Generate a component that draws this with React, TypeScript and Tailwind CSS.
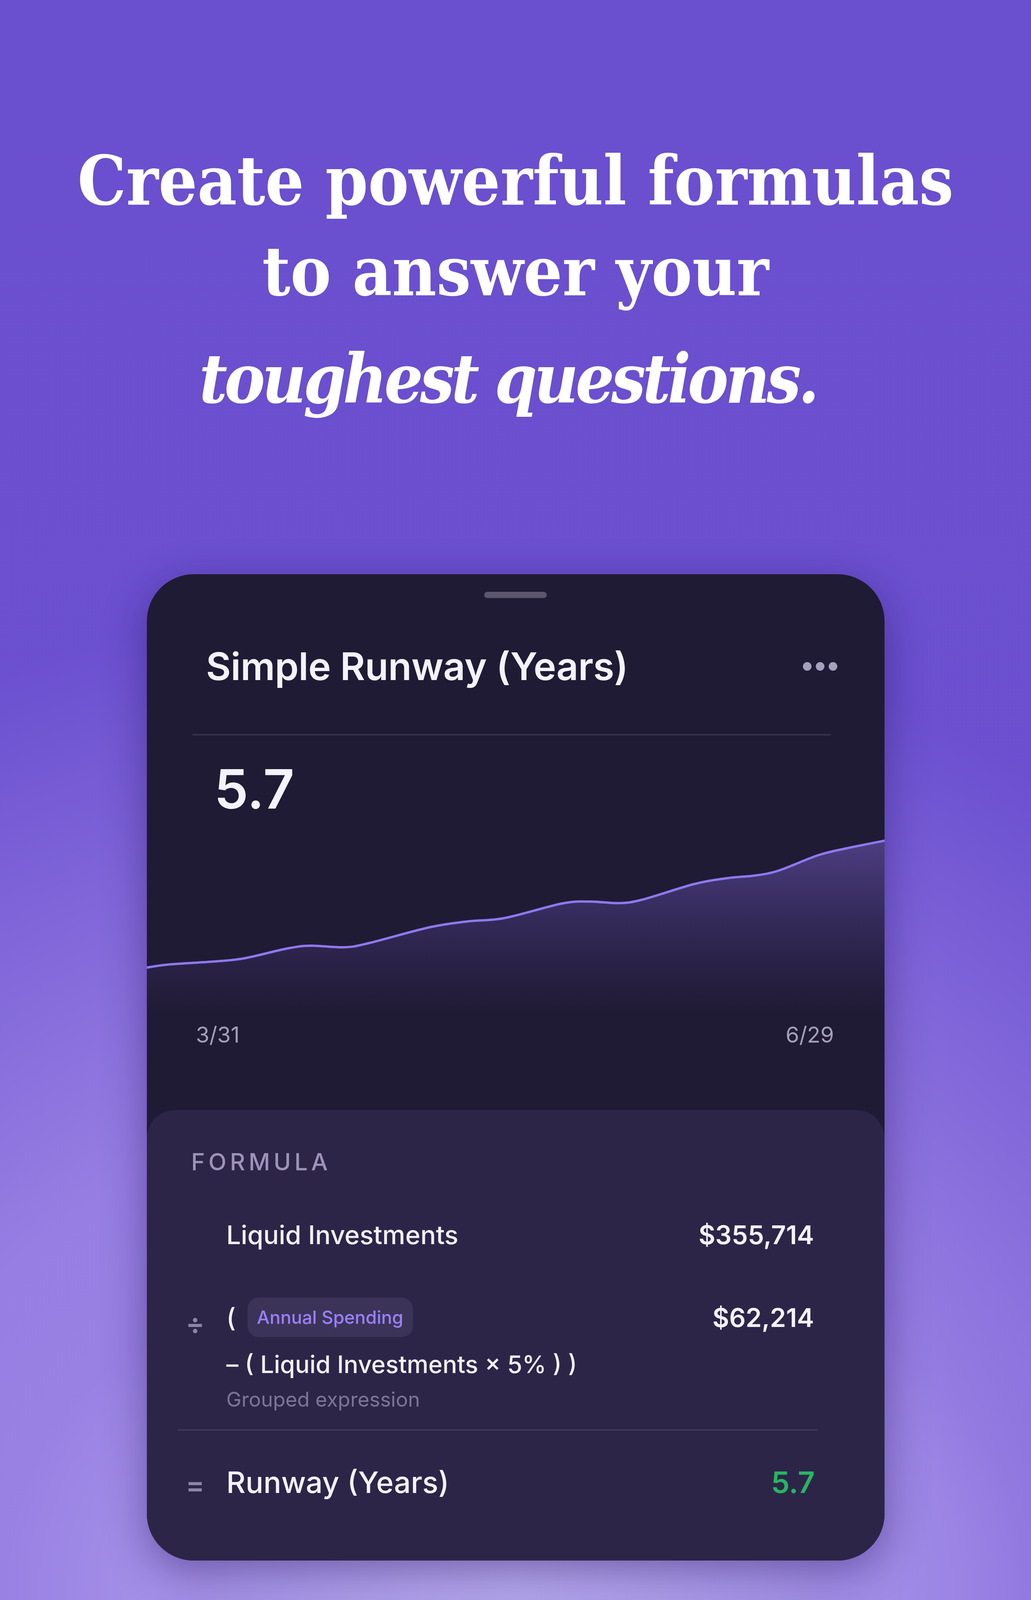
import React from "react";

const PTS: [number, number][] = [
  [-6, 338], [57, 329], [178, 321], [251, 313], [360, 288], [420, 281], [505, 285],
  [566, 275], [723, 234], [820, 219], [917, 210], [1063, 173], [1135, 168], [1208, 172],
  [1269, 163], [1402, 123], [1487, 108], [1560, 101], [1620, 88], [1717, 50], [1790, 32],
  [1895, 11],
];

function smooth(points: [number, number][]) {
  let d = `M${points[0][0]},${points[0][1]}`;
  for (let i = 0; i < points.length - 1; i++) {
    const p0 = points[Math.max(i - 1, 0)];
    const p1 = points[i];
    const p2 = points[i + 1];
    const p3 = points[Math.min(i + 2, points.length - 1)];
    const t = 1 / 6;
    const c1x = p1[0] + (p2[0] - p0[0]) * t;
    const c1y = p1[1] + (p2[1] - p0[1]) * t;
    const c2x = p2[0] - (p3[0] - p1[0]) * t;
    const c2y = p2[1] - (p3[1] - p1[1]) * t;
    d += ` C${c1x.toFixed(1)},${c1y.toFixed(1)} ${c2x.toFixed(1)},${c2y.toFixed(1)} ${p2[0]},${p2[1]}`;
  }
  return d;
}

function Dots() {
  return (
    <div className="flex gap-[11px]">
      <span className="block w-[22px] h-[22px] rounded-full bg-[#a6a0bf]" />
      <span className="block w-[22px] h-[22px] rounded-full bg-[#a6a0bf]" />
      <span className="block w-[22px] h-[22px] rounded-full bg-[#a6a0bf]" />
    </div>
  );
}

function Chart() {
  const line = smooth(PTS);
  const area = `${line} L1895,450 L-6,450 Z`;
  return (
    <svg width="1889" height="450" viewBox="0 0 1889 450" className="block">
      <defs>
        <linearGradient id="fillg" x1="0" y1="0" x2="0" y2="450" gradientUnits="userSpaceOnUse">
          <stop offset="0" stopColor="#8e72f2" stopOpacity="0.42" />
          <stop offset="0.55" stopColor="#7a5fe0" stopOpacity="0.18" />
          <stop offset="1" stopColor="#6b52d0" stopOpacity="0" />
        </linearGradient>
      </defs>
      <path d={area} fill="url(#fillg)" />
      <path d={line} fill="none" stroke="#8f78f0" strokeWidth="6" strokeLinecap="round" />
    </svg>
  );
}

function Pill({ label, selected, w }: { label: string; selected?: boolean; w: string }) {
  if (selected) {
    return (
      <div className={`${w} shrink-0 h-[155px] rounded-full border-[5px] border-[#9b84f5] bg-[#2f2550] flex items-center justify-center text-[58px] font-semibold text-[#9c84f7] whitespace-nowrap`}>
        {label}
      </div>
    );
  }
  return (
    <div className={`${w} shrink-0 h-[155px] rounded-full border-[2px] border-[#3d3553] bg-[#332b45] flex items-center justify-center text-[58px] font-normal text-[#aaa3be] whitespace-nowrap`}>
      {label}
    </div>
  );
}

export default function App() {
  return (
    <div className="w-[2640px] h-[5736px] overflow-hidden bg-[#6a4fce] bg-[image:radial-gradient(ellipse_1300px_900px_at_50%_70.5%,rgba(188,176,242,0.9)_0%,rgba(188,176,242,0)_100%),radial-gradient(ellipse_2800px_2600px_at_40%_72%,rgba(160,138,230,1)_0%,rgba(157,134,229,0.85)_50%,rgba(120,90,215,0)_100%),linear-gradient(180deg,#6a4fce_0%,#6c50d1_50%,#7a5ad7_100%)] flex flex-col items-center font-['Inter',sans-serif]">
      <h1 className="pt-[347px] text-center text-white font-bold text-[174px] leading-[232px] font-['DejaVu_Serif_Condensed','DejaVu_Serif',serif]">
        <div>Create powerful formulas</div>
        <div>to answer your</div>
        <div className="italic mt-[43px] tracking-[-8px] pr-[40px]">toughest questions.</div>
      </h1>

      {/* Card 1 */}
      <div className="mt-[384px] w-[1889px] shrink-0 rounded-[120px] bg-[#201b34] overflow-hidden shadow-[0_30px_110px_rgba(35,18,90,0.45)] flex flex-col">
        <div className="pt-[45px] flex justify-center">
          <div className="w-[160px] h-[16px] rounded-full bg-[#5b566e]" />
        </div>
        <div className="mt-[115px] flex items-center justify-between pl-[152px] pr-[121px]">
          <h2 className="text-[98px] leading-[120px] font-semibold text-[#f4f2fc] tracking-[-0.5px]">Simple Runway (Years)</h2>
          <Dots />
        </div>
        <div className="mt-[113px] ml-[117px] mr-[138px] h-[4px] bg-[#363049]" />
        <div className="mt-[67px] pl-[173px] text-[139px] leading-[139px] font-semibold text-[#f4f2fc]">5.7</div>
        <div className="mt-[51px]">
          <Chart />
        </div>
        <div className="mt-[25px] flex justify-between pl-[126px] pr-[129px] text-[56px] leading-[68px] text-[#a59fbb]">
          <span>3/31</span>
          <span>6/29</span>
        </div>

        {/* Formula */}
        <div className="mt-[159px] rounded-t-[72px] bg-[#2d2548] pt-[96px] pb-[154px] flex flex-col">
          <div className="pl-[114px] text-[60px] leading-[72px] font-medium tracking-[0.15em] text-[#9d93b8]">FORMULA</div>

          <div className="ml-[78px] mr-[172px] flex flex-col">
            <div className="mt-[111px] flex items-center">
              <div className="w-[126px] shrink-0" />
              <div className="flex-1 text-[66px] leading-[80px] font-medium text-[#f2f0fa]">Liquid Investments</div>
              <div className="pr-[8px] text-[66px] leading-[80px] font-semibold text-[#f4f2fc]">$355,714</div>
            </div>

            <div className="mt-[121px] h-[101px] flex items-center">
              <div className="w-[126px] shrink-0 pl-[22px] mt-[30px] text-[72px] leading-[80px] font-semibold text-[#8e86a6]">÷</div>
              <div className="flex-1 flex items-center">
                <span className="text-[66px] leading-[80px] font-medium text-[#f2f0fa]">(</span>
                <span className="ml-[30px] h-[101px] rounded-[28px] bg-[#3b3358] px-[24px] flex items-center text-[46px] font-medium text-[#9a80f5]">Annual Spending</span>
              </div>
              <div className="pr-[8px] text-[66px] leading-[80px] font-semibold text-[#f4f2fc]">$62,214</div>
            </div>

            <div className="mt-[32px] pl-[126px] text-[62px] leading-[76px] font-medium text-[#f2f0fa]">– ( Liquid Investments × 5% ) )</div>
            <div className="mt-[20px] pl-[126px] text-[52px] leading-[64px] text-[#7d7595]">Grouped expression</div>

            <div className="mt-[44px] h-[3px] bg-[#433b5c]" />

            <div className="mt-[85px] flex items-center">
              <div className="w-[126px] shrink-0 pl-[22px] mt-[14px] text-[72px] leading-[80px] font-semibold text-[#8e86a6]">=</div>
              <div className="flex-1 text-[76px] leading-[92px] font-medium text-[#f4f2fc]">Runway (Years)</div>
              <div className="pr-[6px] text-[76px] leading-[92px] font-semibold text-[#27b562]">5.7</div>
            </div>
          </div>
        </div>
      </div>

      {/* Card 2 */}
      <div className="mt-[156px] w-[1889px] shrink-0 rounded-[120px] bg-[#201b34] overflow-hidden shadow-[0_30px_110px_rgba(35,18,90,0.45)] flex flex-col pb-[353px]">
        <div className="pt-[47px] flex justify-center">
          <div className="w-[160px] h-[16px] rounded-full bg-[#5b566e]" />
        </div>
        <div className="mt-[84px] flex items-center justify-between pl-[152px] pr-[112px]">
          <h2 className="text-[98px] leading-[120px] font-semibold text-[#f4f2fc] tracking-[-0.5px]">Monthly Margin</h2>
          <Dots />
        </div>
        <div className="mt-[113px] ml-[127px] mr-[128px] h-[3px] bg-[#363049]" />
        <div className="mt-[142px] pl-[129px] flex gap-[45px] overflow-hidden">
          <Pill label="Jun 2026" w="w-[428px]" />
          <Pill label="May 2026" w="w-[458px]" selected />
          <Pill label="Apr 2026" w="w-[428px]" />
          <Pill label="Mar 2026" w="w-[428px]" />
        </div>
        <div className="mt-[118px] pl-[133px] text-[137px] leading-[137px] font-bold tracking-[-0.5px] text-[#22b35f]">= $4,240</div>
      </div>
    </div>
  );
}
